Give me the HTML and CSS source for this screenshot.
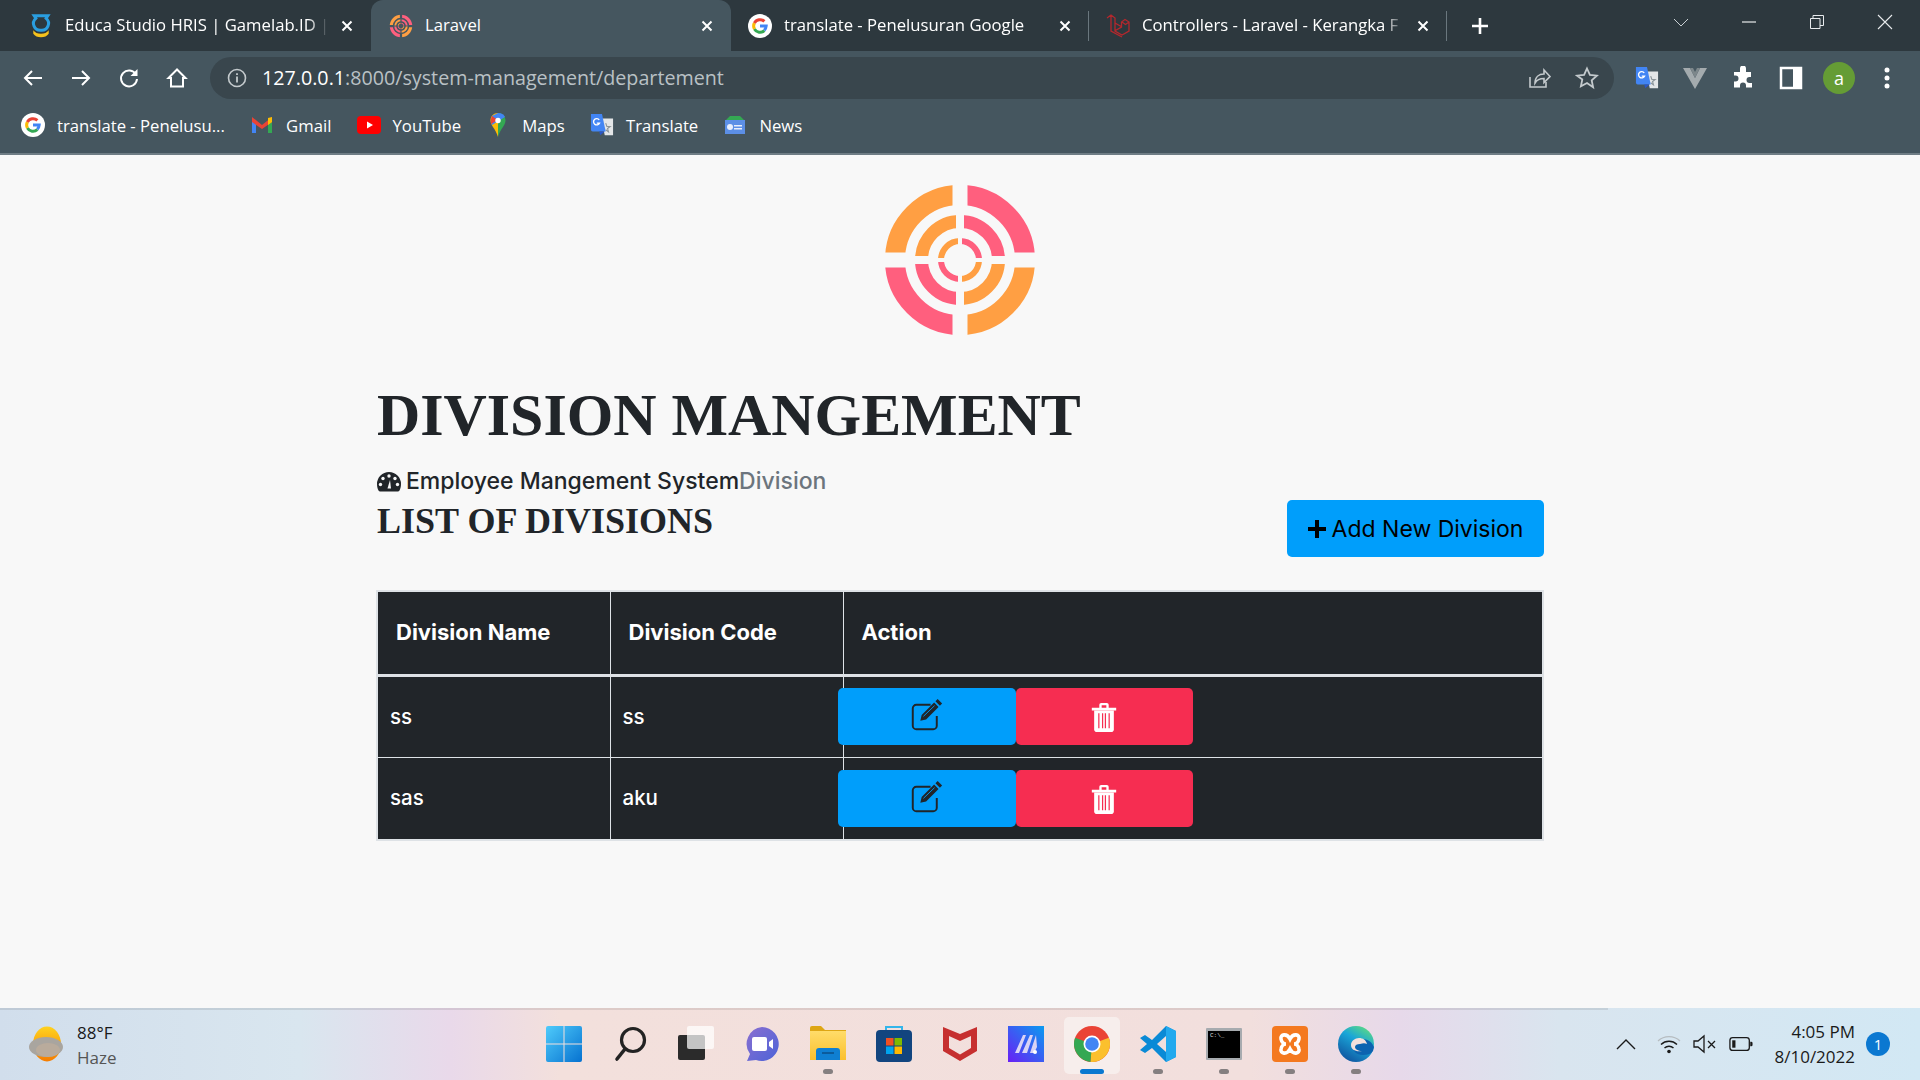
FILE: index.html
```html
<!DOCTYPE html>
<html lang="en">
<head>
  <meta charset="UTF-8">
  <meta name="viewport" content="width=device-width, initial-scale=1.0">
  <title>Laravel</title>
  <link rel="stylesheet" href="styles.css">
</head>
<body>
  <svg class="icon-defs" aria-hidden="true">
    <defs>
      <linearGradient id="win-blue" x1="0" y1="0" x2="1" y2="1"><stop offset="0" stop-color="#4fcbfb"/><stop offset="1" stop-color="#0672d0"/></linearGradient>
      <linearGradient id="ma-bg" x1="1" y1="0" x2="0" y2="1"><stop offset="0" stop-color="#0a9bf0"/><stop offset="1" stop-color="#6a1ff5"/></linearGradient>
      <linearGradient id="edge-bg" x1="0.8" y1="0" x2="0.2" y2="1"><stop offset="0" stop-color="#5fdc7f"/><stop offset="0.4" stop-color="#1aa6d8"/><stop offset="1" stop-color="#0f4f9c"/></linearGradient>
      <linearGradient id="sun" x1="0" y1="0" x2="0" y2="1"><stop offset="0" stop-color="#ffd21f"/><stop offset="1" stop-color="#f57c00"/></linearGradient>
      <linearGradient id="folder" x1="0" y1="0" x2="0" y2="1"><stop offset="0" stop-color="#ffdc6a"/><stop offset="1" stop-color="#fbc02d"/></linearGradient>
      <linearGradient id="meet" x1="0" y1="0" x2="1" y2="1"><stop offset="0" stop-color="#8a6fd0"/><stop offset="1" stop-color="#4c63d8"/></linearGradient>
      <mask id="cut-outer" maskUnits="userSpaceOnUse" x="-80" y="-80" width="160" height="160"><rect x="-80" y="-80" width="160" height="160" fill="#fff"/><path d="M-7.500-80h15v160h-15zM-80-7.500h160v15h-160z" fill="#000"/></mask>
      <mask id="cut-middle" maskUnits="userSpaceOnUse" x="-80" y="-80" width="160" height="160"><rect x="-80" y="-80" width="160" height="160" fill="#fff"/><path d="M-4-80h8v160h-8zM-80-4h160v8h-160z" fill="#000"/></mask>
      <mask id="cut-inner" maskUnits="userSpaceOnUse" x="-80" y="-80" width="160" height="160"><rect x="-80" y="-80" width="160" height="160" fill="#fff"/><path d="M-2-80h4v160h-4zM-80-2h160v4h-160z" fill="#000"/></mask>
    </defs>
    <symbol id="i-google" viewBox="0 0 24 24">
      <circle cx="12" cy="12" r="12" fill="#fff"/>
      <path d="M12 12h6.200a6.400 6.400 0 0 1-2 4.300" fill="none" stroke="#4285f4" stroke-width="3"/>
      <path d="M16.300 16.600A6.400 6.400 0 0 1 6.400 15" fill="none" stroke="#34a853" stroke-width="3"/>
      <path d="M6.400 15a6.400 6.400 0 0 1 0-6" fill="none" stroke="#fbbc05" stroke-width="3"/>
      <path d="M6.400 9a6.400 6.400 0 0 1 10-1.600" fill="none" stroke="#ea4335" stroke-width="3"/>
    </symbol>
    <symbol id="i-target" viewBox="-80 -80 160 160">
      <g mask="url(#cut-outer)" fill="none" stroke-width="20">
        <path d="M-65 0A65 65 0 0 1 0-65M65 0A65 65 0 0 1 0 65" stroke="#ff9f43"/>
        <path d="M0-65A65 65 0 0 1 65 0M0 65A65 65 0 0 1-65 0" stroke="#ff5f7e"/>
      </g>
      <g mask="url(#cut-middle)" fill="none" stroke-width="13">
        <path d="M-38.500 0A38.500 38.500 0 0 1 0-38.500M38.500 0A38.500 38.500 0 0 1 0 38.500" stroke="#ff9f43"/>
        <path d="M0-38.500A38.500 38.500 0 0 1 38.500 0M0 38.500A38.500 38.500 0 0 1-38.500 0" stroke="#ff5f7e"/>
      </g>
      <g mask="url(#cut-inner)" fill="none" stroke-width="6">
        <path d="M-19 0A19 19 0 0 1 0-19M19 0A19 19 0 0 1 0 19" stroke="#ff9f43"/>
        <path d="M0-19A19 19 0 0 1 19 0M0 19A19 19 0 0 1-19 0" stroke="#ff5f7e"/>
      </g>
    </symbol>
    <symbol id="i-close" viewBox="0 0 12 12">
      <path d="M1.500 1.500l9 9M10.500 1.500l-9 9" stroke="#fff" stroke-width="2" fill="none"/>
    </symbol>
    <symbol id="i-translate" viewBox="0 0 26 26">
      <path d="M12 6h13v18H16z" fill="#e3e6e8"/>
      <path d="M17 11l1.300 3.600h3.500l-2.800 2.200 1 3.600-3-2.200" fill="none" stroke="#8a9499" stroke-width="1.200"/>
      <path d="M1 1h12l4 19H3a2 2 0 0 1-2-2z" fill="#4285f4"/>
      <path d="M11 24l5-4h-6z" fill="#2a56c6"/>
      <path d="M10 7.500A3.400 3.400 0 1 0 10.300 11H7.300" fill="none" stroke="#fff" stroke-width="1.500"/>
    </symbol>
    <symbol id="i-edit" viewBox="0 0 36 36">
      <path d="M22 6.500H6a4 4 0 0 0-4 4V30a4 4 0 0 0 4 4h19a4 4 0 0 0 4-4V19" fill="none" stroke="#212529" stroke-width="2.200"/>
      <path d="M30 0l5 5-2.500 2.500-5-5zM26 4l5 5-14 14-6.500 1.500L12 18z" fill="#212529"/>
      <path d="M14 19.500L26.500 7.500" stroke="#009efb" stroke-width="1"/>
    </symbol>
    <symbol id="i-trash" viewBox="0 0 28 32">
      <path d="M1 6h26v3H1zM9 6V3a2 2 0 0 1 2-2h6a2 2 0 0 1 2 2v3h-2.500V3.500h-5V6z" fill="#fff"/>
      <path d="M3.500 9h21v20a3 3 0 0 1-3 3h-15a3 3 0 0 1-3-3z" fill="#fff"/>
      <path d="M8.500 12v16M12.500 12v16M15.500 12v16M19.500 12v16" stroke="#f62d51" stroke-width="1.300"/>
    </symbol>
  </svg>

  <header class="browser">
    <div class="tabstrip">
      <div class="tab">
        <svg class="favicon" viewBox="0 0 24 28"><path d="M4 2h16l-2 3a8 8 0 0 1-6 14A8 8 0 0 1 6 5z" fill="none" stroke="#2a9ee0" stroke-width="3.500"/><path d="M3 19c2 3 5 4 9 4s7-1 9-4v4c-2 3-5 4-9 4s-7-1-9-4z" fill="#f6c21c"/></svg>
        <span class="tab-title">Educa Studio HRIS | Gamelab.ID |</span>
        <svg class="tab-close"><use href="#i-close"/></svg>
      </div>
      <div class="tab tab-active">
        <svg class="favicon"><use href="#i-target"/></svg>
        <span class="tab-title">Laravel</span>
        <svg class="tab-close"><use href="#i-close"/></svg>
      </div>
      <div class="tab tab-divided">
        <svg class="favicon"><use href="#i-google"/></svg>
        <span class="tab-title">translate - Penelusuran Google</span>
        <svg class="tab-close"><use href="#i-close"/></svg>
      </div>
      <div class="tab tab-divided">
        <svg class="favicon" viewBox="0 0 24 24"><path d="M1 4l4-3 4 3v13l7 4 7-4V8l-4-2.500-3.500 2.500v5l-7 4M9 9l7 4M5 1v16l11 6M16 8l3.500 2.500L23 8" fill="none" stroke="#b3282d" stroke-width="1.300"/></svg>
        <span class="tab-title">Controllers - Laravel - Kerangka F</span>
        <svg class="tab-close"><use href="#i-close"/></svg>
      </div>
      <svg class="new-tab" viewBox="0 0 18 18"><path d="M9 1v16M1 9h16" stroke="#fff" stroke-width="2.600"/></svg>
      <div class="window-controls">
        <svg class="win-btn" viewBox="0 0 16 16"><path d="M1 5l7 7 7-7" fill="none" stroke="#c9d0d4" stroke-width="1"/></svg>
        <svg class="win-btn" viewBox="0 0 16 16"><path d="M1 8h14" stroke="#e8ebed" stroke-width="1.200"/></svg>
        <svg class="win-btn" viewBox="0 0 16 16"><path d="M1.500 4.500h9.500v10H1.500zM4 4.500V1.500h10.500v10H11" fill="none" stroke="#e8ebed" stroke-width="1"/></svg>
        <svg class="win-btn" viewBox="0 0 16 16"><path d="M1 1l14 14M15 1L1 15" stroke="#e8ebed" stroke-width="1.100"/></svg>
      </div>
    </div>

    <div class="toolbar">
      <svg class="tool-icon" viewBox="0 0 24 24"><path d="M21 12H4M11 5l-7 7 7 7" fill="none" stroke="#fff" stroke-width="2"/></svg>
      <svg class="tool-icon" viewBox="0 0 24 24"><path d="M3 12h17M13 5l7 7-7 7" fill="none" stroke="#fff" stroke-width="2"/></svg>
      <svg class="tool-icon" viewBox="0 0 24 24"><path d="M19 8.500A8 8 0 1 0 20 13" fill="none" stroke="#fff" stroke-width="2"/><path d="M20.500 3v7h-7z" fill="#fff"/></svg>
      <svg class="tool-icon" viewBox="0 0 24 24"><path d="M12 3.500L3.500 12H6v8.500h12V12h2.500z" fill="none" stroke="#fff" stroke-width="2"/></svg>
      <div class="omnibox">
        <svg class="omni-info" viewBox="0 0 20 20"><circle cx="10" cy="10" r="8.500" fill="none" stroke="#c4cacd" stroke-width="1.600"/><path d="M10 8.500v6M10 5.200v1.800" stroke="#c4cacd" stroke-width="1.800"/></svg>
        <span class="url"><span class="url-host">127.0.0.1</span>:8000/system-management/departement</span>
        <svg class="omni-icon" viewBox="0 0 24 24"><path d="M3 11v10h16v-5" fill="none" stroke="#c4cacd" stroke-width="1.600"/><path d="M8 17c0-6 4-9 9-9V4l6 6.500-6 6v-4c-4 0-7 1-9 4.500z" fill="none" stroke="#c4cacd" stroke-width="1.600"/></svg>
        <svg class="omni-icon" viewBox="0 0 24 24"><path d="M12 2.500l2.900 6.400 7 .8-5.200 4.700 1.400 6.900L12 17l-6.100 3.300 1.400-6.900L2.100 9.700l7-.8z" fill="none" stroke="#c4cacd" stroke-width="1.800"/></svg>
      </div>
      <svg class="ext-icon" viewBox="0 0 26 26"><use href="#i-translate"/></svg>
      <svg class="ext-icon" viewBox="0 0 24 24"><path d="M0 2h7l5 10 5-10h7L12 23z" fill="#a4abae"/><path d="M7 2l5 10 5-10h-3l-2 4-2-4z" fill="#7d878b"/></svg>
      <svg class="ext-icon" viewBox="0 0 24 24"><path d="M9 2.500a3 3 0 0 1 6 0V6h5v5h-1.500a3 3 0 0 0 0 6H21v4.500H15v-2a3 3 0 0 0-6 0v2H3v-6h1.500a3 3 0 0 0 0-6H3V6h6z" fill="#fff"/></svg>
      <svg class="ext-icon" viewBox="0 0 24 24"><path d="M2 2h20v20H2z" fill="none" stroke="#fff" stroke-width="2.500"/><path d="M14 2h8v20h-8z" fill="#fff"/></svg>
      <span class="avatar">a</span>
      <svg class="ext-icon" viewBox="0 0 24 24"><circle cx="12" cy="4" r="2.500" fill="#fff"/><circle cx="12" cy="12" r="2.500" fill="#fff"/><circle cx="12" cy="20" r="2.500" fill="#fff"/></svg>
    </div>

    <nav class="bookmarks">
      <a class="bookmark"><svg class="bm-icon"><use href="#i-google"/></svg>translate - Penelusu...</a>
      <a class="bookmark"><svg class="bm-icon" viewBox="0 0 24 24"><path d="M2 5v15h4V9z" fill="#4285f4"/><path d="M22 5v15h-4V9z" fill="#34a853"/><path d="M2 4l10 8 10-8v5l-10 7L2 9z" fill="#ea4335"/><path d="M18 5l4-1v5l-4 3z" fill="#fbbc05"/></svg>Gmail</a>
      <a class="bookmark"><svg class="bm-icon" viewBox="0 0 24 24"><rect y="3" width="24" height="18" rx="4" fill="#f00"/><path d="M10 8.500l6 3.500-6 3.500z" fill="#fff"/></svg>YouTube</a>
      <a class="bookmark"><svg class="bm-icon" viewBox="0 0 24 24"><path d="M12 0c-4.500 0-7.500 3.500-7.500 7.500 0 5 5 8 7.500 16.500z" fill="#fbbc05"/><path d="M12 0c4.500 0 7.500 3.500 7.500 7.500 0 5-5 8-7.500 16.500z" fill="#34a853"/><path d="M6 3l6-3c4 0 6 2 7 4L6 12z" fill="#4285f4"/><path d="M6 3l6 4-7 4c-.500-3 0-6 1-8z" fill="#ea4335"/><circle cx="12" cy="7.500" r="2.700" fill="#fff"/></svg>Maps</a>
      <a class="bookmark"><svg class="bm-icon" viewBox="0 0 26 26"><use href="#i-translate"/></svg>Translate</a>
      <a class="bookmark"><svg class="bm-icon" viewBox="0 0 24 24"><path d="M3 7L7 3h10l4 4v4H3z" fill="#34a853"/><path d="M2 7h20v14H2z" fill="#5c8fe6"/><path d="M11 12h8v1.500h-8zM11 15h8v1.500h-8z" fill="#e8eefc"/><circle cx="7" cy="14" r="3" fill="#e8eefc"/></svg>News</a>
    </nav>
  </header>

  <main class="page">
    <div class="content">
      <svg class="logo"><use href="#i-target"/></svg>
      <h1 class="page-title">DIVISION MANGEMENT</h1>
      <div class="section-head">
        <div>
          <p class="crumbs"><svg class="crumb-icon" viewBox="0 0 24 20"><path d="M12 0a12 12 0 0 0-12 12c0 3 .7 5 1.500 6.500a2 2 0 0 0 1.800 1h17.400a2 2 0 0 0 1.800-1C23.300 17 24 15 24 12A12 12 0 0 0 12 0z" fill="#212529"/><circle cx="12" cy="4" r="1.700" fill="#f8f8f8"/><circle cx="6" cy="6.500" r="1.700" fill="#f8f8f8"/><circle cx="18" cy="6.500" r="1.700" fill="#f8f8f8"/><circle cx="3.500" cy="12.500" r="1.700" fill="#f8f8f8"/><circle cx="20.500" cy="12.500" r="1.700" fill="#f8f8f8"/><path d="M10.500 16.500L13 8l1 8.500z" fill="#f8f8f8"/></svg>Employee Mangement System<span class="crumb-active">Division</span></p>
          <h2 class="list-title">LIST OF DIVISIONS</h2>
        </div>
        <button class="btn-add"><svg class="plus" viewBox="0 0 18 18"><path d="M7 0h4v7h7v4h-7v7H7v-7H0V7h7z" fill="#000"/></svg>Add New Division</button>
      </div>

      <table class="division-table">
        <thead>
          <tr>
            <th class="col-name">Division Name</th>
            <th class="col-code">Division Code</th>
            <th>Action</th>
          </tr>
        </thead>
        <tbody>
          <tr>
            <td>ss</td>
            <td>ss</td>
            <td class="actions">
              <button class="btn-edit"><svg class="btn-icon"><use href="#i-edit"/></svg></button><button class="btn-delete"><svg class="btn-icon trash"><use href="#i-trash"/></svg></button>
            </td>
          </tr>
          <tr class="row-last">
            <td>sas</td>
            <td>aku</td>
            <td class="actions">
              <button class="btn-edit"><svg class="btn-icon"><use href="#i-edit"/></svg></button><button class="btn-delete"><svg class="btn-icon trash"><use href="#i-trash"/></svg></button>
            </td>
          </tr>
        </tbody>
      </table>
    </div>
  </main>

  <footer class="taskbar">
    <div class="weather">
      <svg class="weather-icon" viewBox="0 0 36 36"><ellipse cx="18" cy="18" rx="14" ry="17.500" fill="url(#sun)"/><ellipse cx="17" cy="21" rx="17" ry="10" fill="#a9a59f"/><ellipse cx="19" cy="24" rx="12" ry="7" fill="#b9ab9c"/></svg>
      <div>
        <div class="temp">88°F</div>
        <div class="haze">Haze</div>
      </div>
    </div>

    <div class="task-icons">
      <div class="task-item">
        <svg class="task-icon" viewBox="0 0 36 36"><path d="M0 2a2 2 0 0 1 2-2h15.500v17.500H0zM18.500 0H34a2 2 0 0 1 2 2v15.500H18.500zM0 18.500h17.500V36H2a2 2 0 0 1-2-2zM18.500 18.500H36V34a2 2 0 0 1-2 2H18.500z" fill="url(#win-blue)"/></svg>
      </div>
      <div class="task-item">
        <svg class="task-icon" viewBox="0 0 36 36"><circle cx="21" cy="14" r="11.500" fill="none" stroke="#232323" stroke-width="3.200"/><path d="M13 23L5 33" stroke="#232323" stroke-width="3.600" stroke-linecap="round"/></svg>
      </div>
      <div class="task-item">
        <svg class="task-icon" viewBox="0 0 36 36"><rect x="0" y="9" width="27" height="25" rx="2" fill="#2b2b2b"/><rect x="9" y="0" width="27" height="23" rx="2" fill="#fff" fill-opacity=".72"/></svg>
      </div>
      <div class="task-item">
        <svg class="task-icon" viewBox="0 0 36 36"><path d="M18 1a17 17 0 1 1-6 33l-9 1 3-7A17 17 0 0 1 18 1z" fill="url(#meet)"/><rect x="8" y="11" width="15" height="14" rx="2" fill="#fff"/><path d="M25 16l4-3v10l-4-3z" fill="#fff"/></svg>
      </div>
      <div class="task-item task-open">
        <svg class="task-icon" viewBox="0 0 36 36"><path d="M0 2a2 2 0 0 1 2-2h9l4 4h21v30H0z" fill="#dea614"/><path d="M0 5h36v29H0z" fill="url(#folder)"/><path d="M6 34v-9a3 3 0 0 1 3-3h18a3 3 0 0 1 3 3v9z" fill="#0f7fd2"/><path d="M12 27h12" stroke="#0b4f8a" stroke-width="1.500"/></svg>
      </div>
      <div class="task-item">
        <svg class="task-icon" viewBox="0 0 36 36"><path d="M10 7V1h16v6" fill="none" stroke="#33b5ea" stroke-width="2"/><rect y="4" width="36" height="32" rx="4" fill="#12457f"/><path d="M10 12h7.500v7.500H10z" fill="#f25022"/><path d="M18.500 12H26v7.500h-7.500z" fill="#7fba00"/><path d="M10 20.500h7.500V28H10z" fill="#00a4ef"/><path d="M18.500 20.500H26V28h-7.500z" fill="#ffb900"/></svg>
      </div>
      <div class="task-item">
        <svg class="task-icon" viewBox="0 0 36 36"><path d="M1 1l17 7 17-7v24L18 35 1 25zM7 10v12l11 6.500L29 22V10l-11 5z" fill="#c62f2f" fill-rule="evenodd"/></svg>
      </div>
      <div class="task-item">
        <svg class="task-icon" viewBox="0 0 36 36"><rect width="36" height="36" fill="url(#ma-bg)"/><path d="M7 27L15 9h3l-7 18zM14 27l8-18h3l-6 18zM22 27l6-18 1 12-3 6z" fill="#d9d3f5"/><circle cx="27" cy="26" r="2" fill="#fff"/></svg>
      </div>
      <div class="task-item task-active">
        <svg class="task-icon" viewBox="0 0 36 36"><circle cx="18" cy="18" r="18" fill="#ea4335"/><path d="M18 18L34.900 11.800A18 18 0 0 1 16.400 35.900z" fill="#fbc02d"/><path d="M18 18L16.400 35.900A18 18 0 0 1 1.100 11.800z" fill="#34a853"/><circle cx="18" cy="18" r="8.500" fill="#fff"/><circle cx="18" cy="18" r="6.800" fill="#4285f4"/></svg>
      </div>
      <div class="task-item task-open">
        <svg class="task-icon" viewBox="0 0 36 36"><path d="M26 0L12 14 5 9 0 12l7 6-7 6 5 3 7-5 14 14 10-5V5zM26 10l-9 8 9 8z" fill="#0a8ad6" fill-rule="evenodd"/><path d="M26 0l10 5v26l-10 5z" fill="#22a9ee"/></svg>
      </div>
      <div class="task-item task-open">
        <svg class="task-icon" viewBox="0 0 36 36"><rect width="36" height="32" y="2" rx="1" fill="#a7abaf"/><rect x="2" y="5" width="32" height="27" fill="#000"/><text class="cmd-text" x="4" y="11">C:\_</text></svg>
      </div>
      <div class="task-item task-open">
        <svg class="task-icon" viewBox="0 0 36 36"><rect width="36" height="36" rx="4" fill="#f4791f"/><path d="M18 13C15 7 8 8 9 13c.5 3 3 5 5 5-2 0-4.500 2-5 5-1 5 6 6 9 0 3 6 10 5 9 0-.5-3-3-5-5-5 2 0 4.500-2 5-5 1-5-6-6-9 0z" fill="none" stroke="#fff" stroke-width="3.600"/></svg>
      </div>
      <div class="task-item task-open">
        <svg class="task-icon" viewBox="0 0 36 36"><circle cx="18" cy="18" r="18" fill="url(#edge-bg)"/><path d="M36 21c-3-7-8-8-13-8-5 0-8 3-8 8 0 4 3 8 10 8 4 0 8-1 10-4z" fill="#0c63b0"/><path d="M22 18c-3 0-5 1-5 3s3 4 7 4c-6 1-11-1-11-6 0-4 4-7 8-7 4 0 7 2 8 6-2-1-4-1-7 0z" fill="#f3e0dc"/></svg>
      </div>
    </div>

    <div class="tray">
      <svg class="tray-chevron" viewBox="0 0 20 12"><path d="M1 11l9-9 9 9" fill="none" stroke="#1a1a1a" stroke-width="1.400"/></svg>
      <svg class="tray-icon" viewBox="0 0 24 20"><path d="M1 7a16 16 0 0 1 22 0" fill="none" stroke="#b6bcc0" stroke-width="1.300"/><path d="M4 10.500a11.500 11.500 0 0 1 16 0M7.500 14a6.500 6.500 0 0 1 9 0" fill="none" stroke="#1a1a1a" stroke-width="1.400"/><circle cx="12" cy="17.500" r="1.800" fill="#1a1a1a"/></svg>
      <svg class="tray-icon" viewBox="0 0 24 20"><path d="M1 7h4l6-5v16l-6-5H1zM15 7l7 7M22 7l-7 7" fill="none" stroke="#1a1a1a" stroke-width="1.300"/></svg>
      <svg class="tray-icon" viewBox="0 0 26 20"><rect x="1" y="3" width="21" height="14" rx="3" fill="none" stroke="#1a1a1a" stroke-width="1.400"/><rect x="3.500" y="6" width="3.500" height="8" fill="#1a1a1a"/><path d="M23 7.500h1a1.500 1.500 0 0 1 1.500 1.500v2a1.500 1.500 0 0 1-1.500 1.500h-1z" fill="#1a1a1a"/></svg>
      <div class="clock">
        <div>4:05 PM</div>
        <div>8/10/2022</div>
      </div>
      <span class="notify">1</span>
    </div>
  </footer>
</body>
</html>
```

FILE: styles.css
```css
* {
  box-sizing: border-box;
}
body {
  margin: 0;
  height: 100vh;
  display: flex;
  flex-direction: column;
  overflow: hidden;
  background-color: #f8f8f8;
  font-family: "Open Sans", sans-serif;
}
.icon-defs {
  position: absolute;
  width: 0;
  height: 0;
}

/* browser chrome */
.browser {
  height: 155px;
  flex: none;
  background-color: #45565f;
  border-bottom: 2px solid #6f7d85;
  color: #fff;
}
.tabstrip {
  height: 51px;
  display: flex;
  align-items: center;
  padding-left: 11px;
  background-color: #2d383e;
}
.tab {
  position: relative;
  width: 360px;
  height: 51px;
  display: flex;
  align-items: center;
  padding: 0 16px 0 18px;
  gap: 12px;
  font-size: 16.700px;
}
.tab-active {
  background-color: #45565f;
  border-radius: 12px 12px 0 0;
}
.tab-divided {
  width: 358px;
  padding-left: 17px;
}
.tab-divided::after {
  content: "";
  position: absolute;
  right: 0;
  top: 11px;
  height: 30px;
  width: 1px;
  background-color: #6a777e;
}
.favicon {
  width: 24px;
  height: 24px;
  flex: none;
}
.tab-title {
  flex: 1;
  margin-top: -2px;
  white-space: nowrap;
  overflow: hidden;
  -webkit-mask-image: linear-gradient(to right, #000 92%, transparent);
  mask-image: linear-gradient(to right, #000 92%, transparent);
}
.tab-active .tab-title {
  -webkit-mask-image: none;
  mask-image: none;
}
.tab-close {
  width: 12px;
  height: 12px;
  flex: none;
  margin-right: 2px;
}
.new-tab {
  width: 18px;
  height: 18px;
  margin-left: 24px;
}
.window-controls {
  margin-left: auto;
  display: flex;
  align-self: flex-start;
  margin-top: 14px;
  margin-right: 27px;
  gap: 52px;
}
.win-btn {
  width: 16px;
  height: 16px;
}
.toolbar {
  height: 53px;
  display: flex;
  align-items: center;
  padding-left: 21px;
}
.tool-icon {
  width: 24px;
  height: 24px;
  margin-right: 24px;
  flex: none;
}
.omnibox {
  width: 1404px;
  flex: none;
  height: 42px;
  margin-left: -3px;
  margin-right: 21px;
  padding: 0 15px 0 17px;
  display: flex;
  align-items: center;
  background-color: #39464d;
  border-radius: 21px;
}
.omni-info {
  width: 20px;
  height: 20px;
  margin-right: 15px;
}
.url {
  flex: 1;
  font-size: 19.700px;
  color: #b9c1c5;
}
.url-host {
  color: #fff;
}
.omni-icon {
  width: 24px;
  height: 24px;
  margin-left: 24px;
}
.ext-icon {
  width: 24px;
  height: 24px;
  margin-right: 24px;
  flex: none;
}
.avatar {
  width: 32px;
  height: 32px;
  margin: 0 20px 0 -4px;
  flex: none;
  display: flex;
  align-items: center;
  justify-content: center;
  background-color: #659c35;
  border-radius: 50%;
  font-size: 18px;
}
.bookmarks {
  height: 49px;
  display: flex;
  align-items: center;
  padding: 0 0 7px 21px;
  font-size: 16.700px;
}
.bookmark {
  display: flex;
  align-items: center;
  gap: 12px;
  margin-right: 25.200px;
}
.bm-icon {
  width: 24px;
  height: 24px;
  flex: none;
}

/* page */
.page {
  flex: 1;
  min-height: 0;
  color: #212529;
  font-family: Inter, sans-serif;
}
.content {
  width: 1168px;
  margin: 0 auto;
  padding-top: 25px;
  display: flex;
  flex-direction: column;
}
.logo {
  width: 160px;
  height: 160px;
  margin: 0 auto;
}
.page-title {
  margin: 39px 0 0 1px;
  font-family: "Liberation Serif", serif;
  font-size: 59.900px;
  line-height: 72px;
  font-weight: bold;
}
.section-head {
  display: flex;
  justify-content: space-between;
  align-items: flex-start;
}
.crumbs {
  margin: 15px 0 0 1px;
  font-size: 23px;
  font-weight: 500;
  line-height: 30px;
}
.crumb-icon {
  width: 24px;
  height: 20px;
  margin-right: 5px;
  vertical-align: -3px;
}
.crumb-active {
  color: #6c757d;
}
.list-title {
  margin: 5px 0 0 1px;
  font-family: "Liberation Serif", serif;
  font-size: 36px;
  line-height: 40px;
}
.btn-add {
  width: 257px;
  height: 57px;
  margin-top: 49px;
  padding-bottom: 1px;
  display: flex;
  align-items: center;
  justify-content: center;
  gap: 6px;
  background-color: #009efb;
  color: #000;
  border: none;
  border-radius: 5px;
  font-family: inherit;
  font-size: 23px;
}
.plus {
  width: 18px;
  height: 18px;
}
.division-table {
  width: 1168px;
  margin-top: 33px;
  border-collapse: collapse;
  background-color: #212529;
  color: #fff;
  border: 2px solid #dee2e6;
}
.division-table th {
  height: 84px;
  padding: 0 18px 2px;
  text-align: left;
  font-size: 22px;
  font-weight: 700;
  border-left: 1px solid #dee2e6;
  border-bottom: 3px solid #dee2e6;
}
.division-table td {
  height: 82px;
  padding: 0 12px 1px;
  font-size: 20.500px;
  font-weight: 500;
  border-left: 1px solid #dee2e6;
  border-bottom: 1px solid #dee2e6;
}
.division-table .row-last td {
  height: 83px;
}
.col-name,
.col-code {
  width: 233px;
}
.division-table .actions {
  padding: 0;
}
.division-table .row-last .actions {
  padding-top: 1px;
}
.actions button {
  height: 57px;
  vertical-align: middle;
  border: none;
  border-radius: 5px;
  padding: 0;
}
.btn-edit {
  width: 178px;
  margin-left: -6px;
  background-color: #009efb;
}
.btn-delete {
  width: 177px;
  background-color: #f62d51;
}
.btn-icon {
  width: 32px;
  height: 32px;
  display: block;
  margin: -3px auto 0;
}
.btn-icon.trash {
  width: 28px;
  height: 30px;
  margin-top: 0;
}

/* windows taskbar */
.taskbar {
  position: relative;
  height: 72px;
  flex: none;
  display: grid;
  grid-template-columns: 1fr auto 1fr;
  align-items: center;
  background: linear-gradient(to right, #d1deec 0, #d9e6ef 300px, #e9d9ea 450px, #f3e0dc 560px, #f2dfdd 1250px, #e7d9ea 1400px, #d9e5ef 1560px, #d2e8f4 1920px);
  color: #1a1a1a;
}
.taskbar::before {
  content: "";
  position: absolute;
  left: 0;
  top: 0;
  width: 1608px;
  height: 2px;
  background-color: rgba(0, 0, 0, 0.09);
}
.weather {
  display: flex;
  align-items: center;
  padding: 2px 0 0 29px;
  gap: 12px;
  font-size: 17px;
}
.weather-icon {
  width: 36px;
  height: 36px;
  margin-top: -2px;
}
.temp {
  line-height: 25px;
}
.haze {
  line-height: 25px;
  color: #555;
}
.task-icons {
  display: flex;
}
.task-item {
  position: relative;
  width: 66px;
  height: 72px;
  display: flex;
  align-items: center;
  justify-content: center;
}
.task-icon {
  width: 36px;
  height: 36px;
}
.task-open::after {
  content: "";
  position: absolute;
  left: 28px;
  bottom: 6px;
  width: 10px;
  height: 5px;
  border-radius: 3px;
  background-color: #857f80;
}
.task-active::before {
  content: "";
  position: absolute;
  left: 5px;
  top: 9px;
  width: 56px;
  height: 57px;
  border-radius: 5px;
  background-color: #f7eeec;
}
.task-active .task-icon {
  position: relative;
}
.task-active::after {
  content: "";
  position: absolute;
  left: 21px;
  bottom: 6px;
  width: 24px;
  height: 5px;
  border-radius: 3px;
  background-color: #0a78d0;
}
.cmd-text {
  fill: #ddd;
  font-family: "Liberation Mono", monospace;
  font-size: 6px;
}
.tray {
  display: flex;
  align-items: center;
  justify-content: flex-end;
  padding-right: 30px;
}
.tray-chevron {
  width: 20px;
  height: 12px;
  margin-right: 21px;
}
.tray-icon {
  width: 24px;
  height: 20px;
  margin-right: 12px;
}
.clock {
  margin-left: 9px;
  text-align: right;
  font-size: 17px;
  line-height: 25px;
}
.notify {
  width: 24px;
  height: 24px;
  margin-left: 11px;
  display: flex;
  align-items: center;
  justify-content: center;
  background-color: #0b78d1;
  border-radius: 50%;
  color: #fff;
  font-size: 15px;
}
```
